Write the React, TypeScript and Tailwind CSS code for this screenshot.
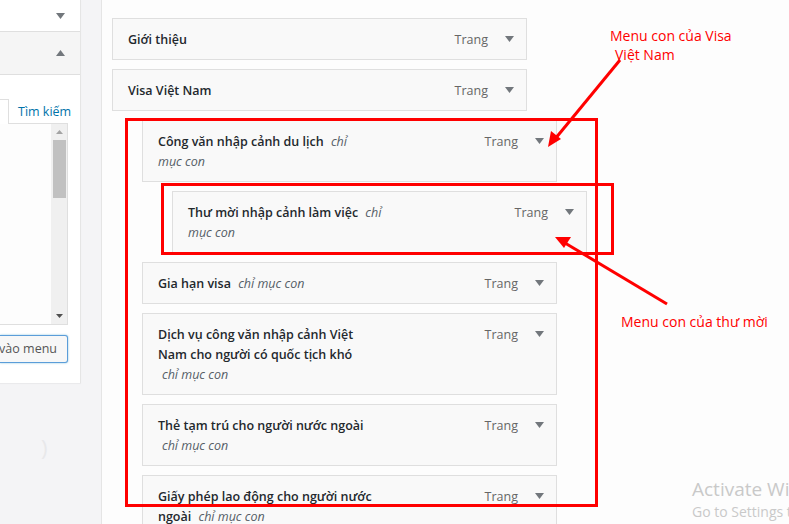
import React from "react";

type Item = {
  title: string;
  depth: 0 | 1 | 2;
  sub?: boolean;
};

const items: Item[] = [
  { title: "Giới thiệu", depth: 0 },
  { title: "Visa Việt Nam", depth: 0 },
  { title: "Công văn nhập cảnh du lịch", depth: 1, sub: true },
  { title: "Thư mời nhập cảnh làm việc", depth: 2, sub: true },
  { title: "Gia hạn visa", depth: 1, sub: true },
  { title: "Dịch vụ công văn nhập cảnh Việt Nam cho người có quốc tịch khó", depth: 1, sub: true },
  { title: "Thẻ tạm trú cho người nước ngoài", depth: 1, sub: true },
  { title: "Giấy phép lao động cho người nước ngoài", depth: 1, sub: true },
];

const indent = {
  0: "ml-0",
  1: "ml-[30px]",
  2: "ml-[60px]",
};

function ArrowDown({ className = "" }: { className?: string }) {
  return (
    <svg width="9" height="6" viewBox="0 0 9 6" className={className}>
      <polygon points="0,0 9,0 4.5,6" fill="#72777c" />
    </svg>
  );
}

function ArrowUp({ className = "" }: { className?: string }) {
  return (
    <svg width="9" height="6" viewBox="0 0 9 6" className={className}>
      <polygon points="0,6 9,6 4.5,0" fill="#72777c" />
    </svg>
  );
}

function MenuItem({ item }: { item: Item }) {
  return (
    <div
      className={`${indent[item.depth]} mt-[9px] flex w-[415px] items-start border border-[#dfdfdf] bg-[#f9f9f9] pb-[9px] pl-[15px] pr-[12px] pt-[11px] text-[12.5px] leading-[20px]`}
    >
      <div className="w-[214px]">
        <span className="font-semibold text-[#23282d]">{item.title}</span>{" "}
        {item.sub && <span className="ml-[4px] italic text-[#555d66]">chỉ mục con</span>}
      </div>
      <div className="ml-auto flex h-[20px] items-center gap-[17px]">
        <span className="text-[#666]">Trang</span>
        <ArrowDown className="-mt-[3px]" />
      </div>
    </div>
  );
}

function LeftPanel() {
  return (
    <div className="flex h-[383px] w-[81px] shrink-0 flex-col border-r border-[#e5e5e5] bg-white shadow-[0_1px_1px_rgba(0,0,0,0.04)]">
      <div className="flex h-[32px] items-center justify-end border-b border-[#dfdfdf] pr-[15px]">
        <ArrowDown />
      </div>
      <div className="flex h-[43px] items-center justify-end border-b border-[#dfdfdf] bg-[#f5f5f5] pr-[15px]">
        <ArrowUp />
      </div>
      <div className="pt-[24px]">
        <div className="flex h-[25px]">
          <div className="w-[9px] border-r border-t border-[#dfdfdf]" />
          <div className="w-[59px] whitespace-nowrap border-b border-[#dfdfdf] pl-[9px] text-[12.5px] leading-[25px] text-[#0073aa]">
            Tìm kiếm
          </div>
        </div>
        <div className="flex h-[201px] w-[68px] justify-end border-b border-r border-[#dfdfdf] bg-[#fdfdfd]">
          <div className="flex w-[16px] flex-col items-center bg-[#f0f0f0]">
            <div className="flex h-[16px] items-center">
              <svg width="7" height="4" viewBox="0 0 7 4">
                <polygon points="0,4 7,4 3.5,0" fill="#a3a3a3" />
              </svg>
            </div>
            <div className="h-[58px] w-[13px] bg-[#c1c1c1]" />
            <div className="flex-1" />
            <div className="flex h-[16px] items-center">
              <svg width="7" height="4" viewBox="0 0 7 4">
                <polygon points="0,0 7,0 3.5,4" fill="#505050" />
              </svg>
            </div>
          </div>
        </div>
        <div className="mt-[10px] flex h-[28px] w-[68px] items-center justify-end whitespace-nowrap rounded-r-[3px] border border-l-0 border-[#5b9dd9] bg-[#f7f7f7] pr-[10px] text-[12.5px] text-[#555] shadow-[0_0_2px_rgba(30,140,190,0.6)]">
          vào menu
        </div>
      </div>
    </div>
  );
}

export default function App() {
  return (
    <div
      className="relative flex h-[524px] w-[789px] overflow-hidden bg-[#f4f4f6] text-[13px]"
      style={{ fontFamily: '"Open Sans", "Noto Sans", sans-serif' }}
    >
      <div className="flex w-[101px] shrink-0 flex-col">
        <LeftPanel />
        <div className="ml-[41px] mt-[53px] text-[22px] leading-none text-[#e8e8ea]">)</div>
      </div>

      <div className="flex-1 border-l border-[#e5e5e5] bg-[#fdfdfd] pl-[10px]">
        <div className="-mt-[9px] h-[9px] w-[415px] border-x border-b border-[#dfdfdf] bg-[#f9f9f9]" />
        <div className="flex flex-col pt-[9px]">
          {items.map((item) => (
            <MenuItem key={item.title} item={item} />
          ))}
        </div>
      </div>

      {/* annotations */}
      <div className="absolute left-[125px] top-[118px] h-[389px] w-[473px] border-[3px] border-[#ff0000]" />
      <div className="absolute left-[161px] top-[183px] h-[72px] w-[453px] border-[3px] border-[#ff0000]" />

      <svg className="pointer-events-none absolute left-0 top-0" width="789" height="524">
        <line x1="620" y1="60" x2="555" y2="139" stroke="#ff0000" strokeWidth="3" />
        <polygon points="548,147 551,131 561,139" fill="#ff0000" />
        <line x1="667" y1="304" x2="565" y2="243" stroke="#ff0000" strokeWidth="3" />
        <polygon points="555,237 571,237 564,248" fill="#ff0000" />
      </svg>

      <div className="absolute left-[610px] top-[26px] text-[14px] leading-[19px] text-[#ff0000]">
        <div>Menu con của Visa</div>
        <div className="pl-[5px]">Việt Nam</div>
      </div>
      <div className="absolute left-[621px] top-[312px] text-[14px] leading-[19px] text-[#ff0000]">
        Menu con của thư mời
      </div>

      <div className="absolute left-[692px] top-[480px] whitespace-nowrap leading-none text-[#c9c9c9]">
        <div className="text-[19px]">Activate Windows</div>
        <div className="mt-[6px] text-[14px]">Go to Settings to activate Windows.</div>
      </div>
    </div>
  );
}
